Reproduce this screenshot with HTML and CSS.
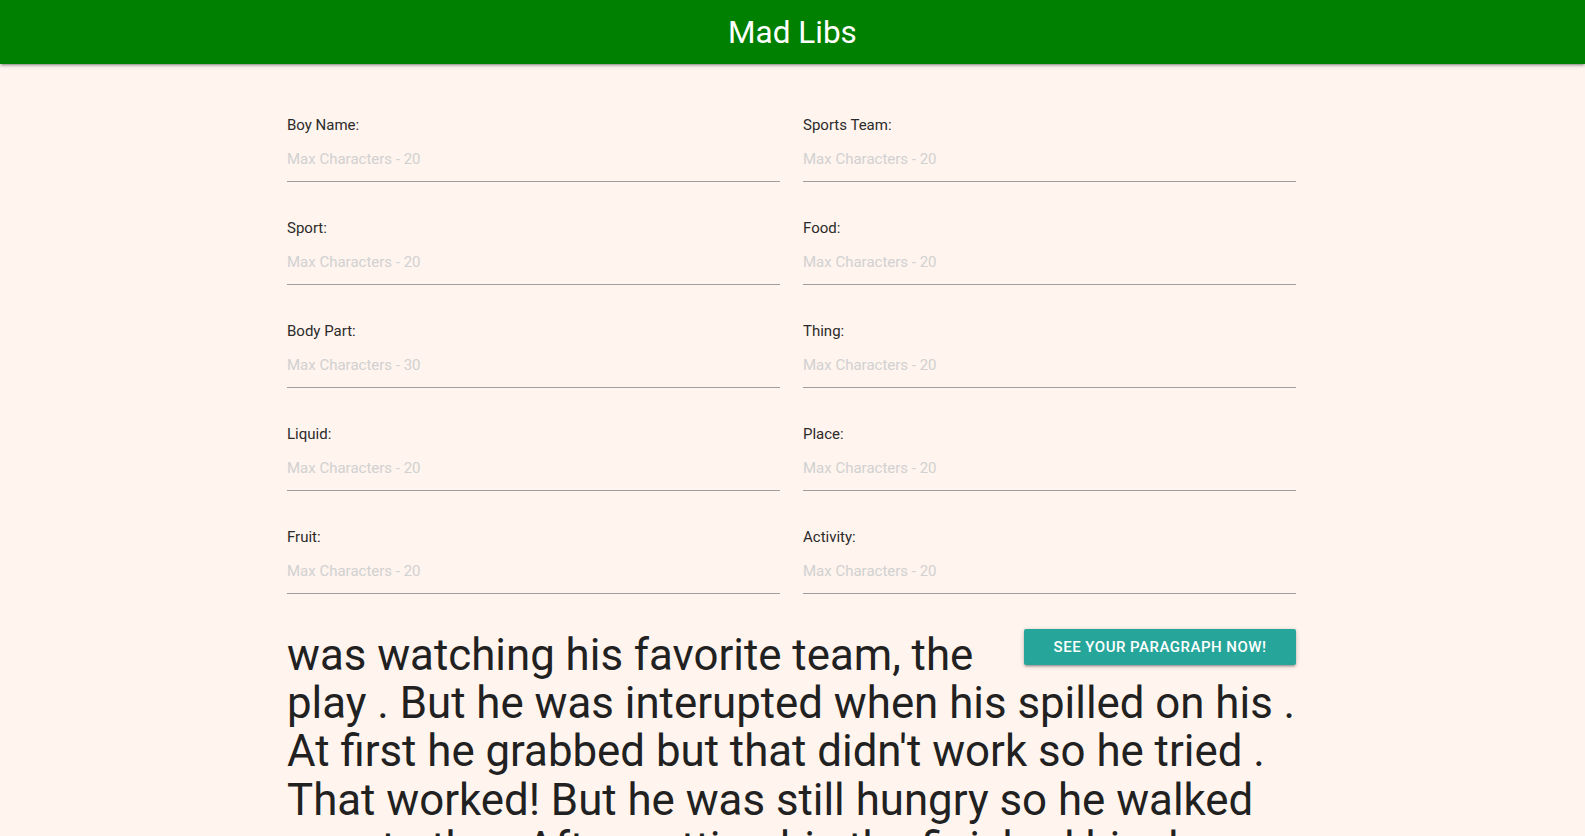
FILE: index.html
```html
<!DOCTYPE html>
<html lang="en">
<head>
<meta charset="utf-8">
<title>Mad Libs</title>
<link rel="stylesheet" href="styles.css">
</head>
<body>
<header class="topbar">
  <h1 class="brand">Mad Libs</h1>
</header>
<main class="container">
  <form class="fields">
    <div class="field"><label class="field-label">Boy Name:</label><input class="field-input" type="text" placeholder="Max Characters - 20"></div>
    <div class="field"><label class="field-label">Sports Team:</label><input class="field-input" type="text" placeholder="Max Characters - 20"></div>
    <div class="field"><label class="field-label">Sport:</label><input class="field-input" type="text" placeholder="Max Characters - 20"></div>
    <div class="field"><label class="field-label">Food:</label><input class="field-input" type="text" placeholder="Max Characters - 20"></div>
    <div class="field"><label class="field-label">Body Part:</label><input class="field-input" type="text" placeholder="Max Characters - 30"></div>
    <div class="field"><label class="field-label">Thing:</label><input class="field-input" type="text" placeholder="Max Characters - 20"></div>
    <div class="field"><label class="field-label">Liquid:</label><input class="field-input" type="text" placeholder="Max Characters - 20"></div>
    <div class="field"><label class="field-label">Place:</label><input class="field-input" type="text" placeholder="Max Characters - 20"></div>
    <div class="field"><label class="field-label">Fruit:</label><input class="field-input" type="text" placeholder="Max Characters - 20"></div>
    <div class="field"><label class="field-label">Activity:</label><input class="field-input" type="text" placeholder="Max Characters - 20"></div>
  </form>
  <section class="story">
    <button class="btn" type="button">See your paragraph now!</button>
    <p class="paragraph"> was watching his favorite team, the  play . But he was interupted when his  spilled on his . At first he grabbed  but that didn't work so he tried . That worked! But he was still hungry so he walked over to the . After getting his  the finished his day with  at the park.</p>
  </section>
</main>
</body>
</html>
```

FILE: styles.css
```css
html {
  scrollbar-width: none;
}
html::-webkit-scrollbar {
  width: 0;
  height: 0;
}
body {
  margin: 0;
  background: #fff4ee;
  font-family: Roboto, "Noto Sans", "Liberation Sans", sans-serif;
  color: #212121;
}
.topbar {
  height: 64px;
  background: #008000;
  box-shadow: 0 2px 2px 0 rgba(0,0,0,0.14), 0 3px 1px -2px rgba(0,0,0,0.12), 0 1px 5px 0 rgba(0,0,0,0.2);
}
.brand {
  margin: 0;
  height: 64px;
  font-size: 31.5px;
  font-weight: 400;
  line-height: 66px;
  text-align: center;
  color: #ffffff;
}
.container {
  width: 1011px;
  margin: 0 auto;
  padding-top: 52px;
}
.fields {
  display: grid;
  grid-template-columns: 1fr 1fr;
  column-gap: 23px;
  row-gap: 37px;
  margin: 0 2px 0 0;
}
.field {
  display: flex;
  flex-direction: column;
}
.field-label {
  font-size: 15px;
  line-height: 18px;
  height: 18px;
  color: #2b2b2b;
}
.field-input {
  box-sizing: content-box;
  height: 44px;
  padding: 3px 0 0 0;
  margin: 0;
  border: none;
  border-bottom: 1px solid #9e9e9e;
  background: transparent;
  font-family: inherit;
  font-size: 15px;
  color: #212121;
  outline: none;
}
.field-input::placeholder {
  color: #d1d1d1;
}
.story {
  margin: 35px 2px 0 0;
}
.btn {
  float: right;
  height: 36px;
  padding: 0 29.5px;
  margin: 0 0 0 20px;
  border: none;
  border-radius: 2px;
  background: #26a69a;
  color: #ffffff;
  font-family: inherit;
  font-size: 15px;
  font-weight: 500;
  letter-spacing: 0.5px;
  text-transform: uppercase;
  line-height: 36px;
  box-shadow: 0 2px 2px 0 rgba(0,0,0,0.14), 0 3px 1px -2px rgba(0,0,0,0.12), 0 1px 5px 0 rgba(0,0,0,0.2);
  cursor: pointer;
}
.paragraph {
  margin: 0;
  padding-top: 2px;
  font-size: 43.8px;
  line-height: 48.18px;
  color: #212121;
}
```
